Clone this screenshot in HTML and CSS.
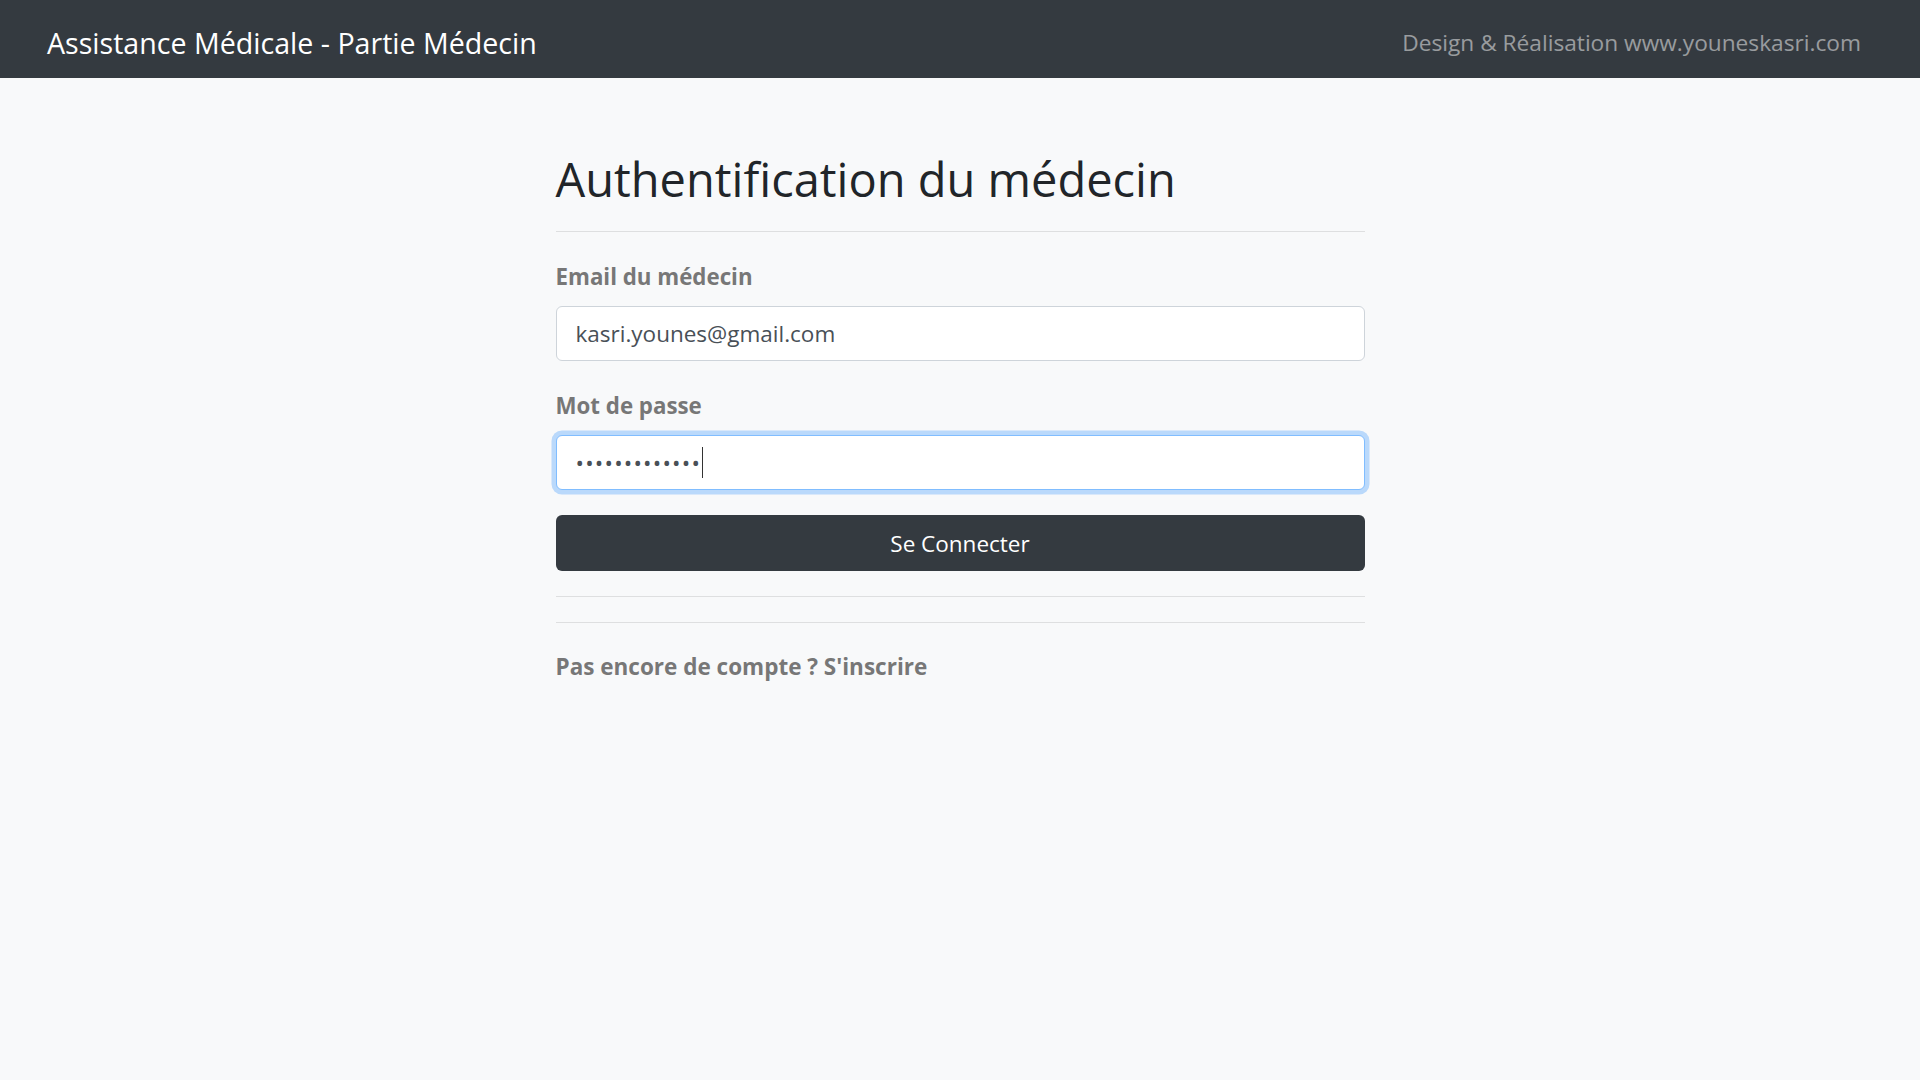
FILE: index.html
```html
<!DOCTYPE html>
<html lang="fr">
<head>
<meta charset="utf-8">
<title>Assistance Médicale - Partie Médecin</title>
<link rel="stylesheet" href="styles.css">
</head>
<body>
<nav class="navbar">
  <span class="brand">Assistance Médicale - Partie Médecin</span>
  <span class="credit">Design &amp; Réalisation www.youneskasri.com</span>
</nav>
<main class="container">
  <h1 class="title">Authentification du médecin</h1>
  <hr class="rule">
  <form class="login">
    <label class="label" for="email">Email du médecin</label>
    <input class="field" id="email" type="email" value="kasri.younes@gmail.com">
    <label class="label" for="pwd">Mot de passe</label>
    <div class="field-wrap">
      <input class="field field-focus" id="pwd" type="password" value="1234567890123">
      <span class="caret"></span>
    </div>
    <button class="btn" type="button">Se Connecter</button>
  </form>
  <hr class="rule rule-a">
  <hr class="rule rule-b">
  <a class="signup" href="#">Pas encore de compte ? S'inscrire</a>
</main>
</body>
</html>
```

FILE: styles.css
```css
* { box-sizing: border-box; }
html, body { margin: 0; padding: 0; }
body {
  background: #f8f9fa;
  font-family: "Open Sans", "Noto Sans", "DejaVu Sans", sans-serif;
  color: #212529;
  min-height: 1080px;
}
.navbar {
  height: 78px;
  background: #343a40;
  display: flex;
  align-items: center;
  justify-content: space-between;
  padding: 9px 59px 0 47px;
}
.brand {
  color: #fff;
  font-size: 28.6px;
  line-height: 1;
  white-space: nowrap;
}
.credit {
  color: rgba(255,255,255,0.5);
  font-size: 22.7px;
  line-height: 1;
  white-space: nowrap;
}
.container {
  width: 809px;
  margin: 0 auto;
  padding-top: 71px;
}
.title {
  margin: 0;
  font-size: 47px;
  font-weight: 500;
  line-height: 60px;
  color: #212529;
}
.rule {
  border: 0;
  border-top: 1px solid rgba(0,0,0,0.1);
  margin: 0;
}
.title + .rule { margin-top: 22px; }
.login {
  display: flex;
  flex-direction: column;
  padding-top: 30px;
}
.label {
  font-size: 22.3px;
  font-weight: 700;
  color: #777;
  line-height: 30px;
  margin-bottom: 14px;
}
.field {
  width: 100%;
  height: 55px;
  border: 1.5px solid #ced4da;
  border-radius: 6px;
  background: #fff;
  padding: 0 19px;
  font-family: inherit;
  font-size: 22.5px;
  color: #495057;
  margin-bottom: 30px;
  outline: none;
}
.field-wrap {
  position: relative;
  margin-bottom: 25px;
}
.field-focus {
  display: block;
  margin: 0;
  border-color: #80bdff;
  box-shadow: 0 0 0 4.5px rgba(0,123,255,0.25);
  letter-spacing: 1.2px;
}
.caret {
  position: absolute;
  left: 146px;
  top: 12px;
  width: 1px;
  height: 31px;
  background: #333;
}
.btn {
  height: 56px;
  background: #343a40;
  color: #fff;
  border: 0;
  border-radius: 6px;
  font-family: inherit;
  font-size: 22.5px;
}
.rule-a { margin-top: 25px; }
.rule-b { margin-top: 25px; }
.signup {
  display: block;
  margin-top: 29px;
  font-size: 22.5px;
  font-weight: 700;
  color: #777;
  text-decoration: none;
  line-height: 30px;
}
```
